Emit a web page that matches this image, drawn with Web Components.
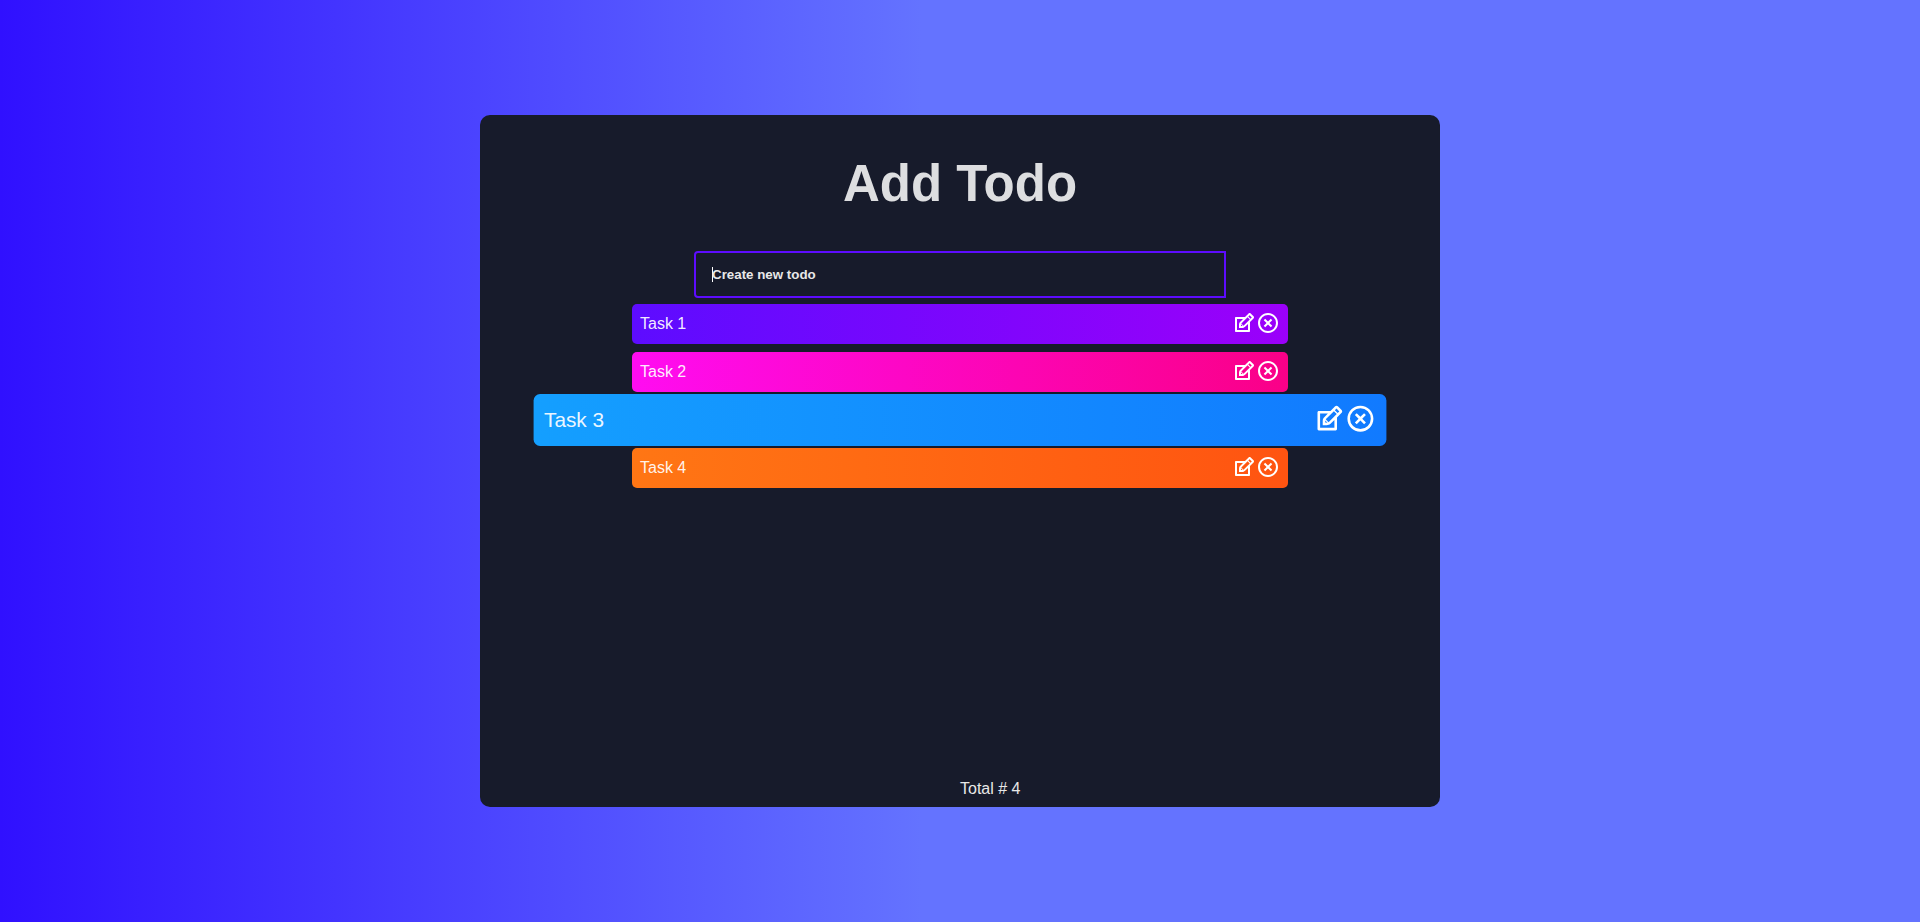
<!DOCTYPE html>
<html lang="en">
<head>
<meta charset="utf-8">
<meta name="viewport" content="width=device-width, initial-scale=1">
<title>Add Todo</title>
<style>
  body {
    margin: 0;
    font-family: "Liberation Sans", Arial, sans-serif;
    font-size: 16px;
    background: linear-gradient(90deg, #3010ff 0%, #6473ff 48%);
  }
</style>
</head>
<body>
<todo-app></todo-app>

<script>
  class TodoInput extends HTMLElement {
    constructor() {
      super();
      this.attachShadow({ mode: "open" }).innerHTML = `
        <style>
          :host { display: block; }
          form { display: flex; justify-content: center; }
          input {
            box-sizing: border-box;
            width: 532px;
            max-width: 90%;
            padding: 14px 16px;
            border: 2px solid #5d0cff;
            border-radius: 4px 0 0 4px;
            outline: none;
            font-family: inherit;
            font-weight: bold;
            color: #fff;
            background: linear-gradient(#fff, #fff) 16px 14px / 1px 15px no-repeat;
            caret-color: transparent;
          }
          input::placeholder { color: #e8e8e8; opacity: 1; }
        </style>
        <form>
          <input type="text" placeholder="Create new todo" aria-label="Create new todo">
        </form>`;
    }
  }
  customElements.define("todo-input", TodoInput);

  class TodoItem extends HTMLElement {
    constructor() {
      super();
      this.attachShadow({ mode: "open" }).innerHTML = `
        <style>
          :host {
            box-sizing: border-box;
            display: flex;
            align-items: center;
            justify-content: space-between;
            min-height: 40px;
            padding: 0 8px;
            border-radius: 5px;
            color: #fff;
            background: linear-gradient(90deg, #5d0cff 0%, #9b00fa 100%);
          }
          :host([tone="pink"]) { background: linear-gradient(90deg, #ff0cf1 0%, #fa0087 100%); }
          :host([tone="blue"]) { background: linear-gradient(90deg, #149fff 0%, #117aff 100%); }
          :host([tone="orange"]) { background: linear-gradient(90deg, #ff7614 0%, #ff5411 100%); }
          :host([active]) { transform: scale(1.3); }
          .text { color: #ffffffee; }
          .actions { display: flex; padding-bottom: 2px; }
          button { display: block; padding: 0; border: 0; background: none; color: inherit; cursor: pointer; }
          svg { display: block; width: 24px; height: 24px; fill: currentColor; }
        </style>
        <span class="text"><slot></slot></span>
        <div class="actions">
          <button type="button" aria-label="Edit">
            <svg viewBox="0 0 24 24"><path d="M21.561 5.318l-2.879-2.879c-.293-.293-.677-.439-1.061-.439-.385 0-.768.146-1.061.439l-3.56 3.561h-9c-.552 0-1 .447-1 1v13c0 .553.448 1 1 1h13c.552 0 1-.447 1-1v-9l3.561-3.561c.293-.293.439-.677.439-1.061s-.146-.767-.439-1.06zm-10.061 9.354l-2.172-2.172 6.293-6.293 2.172 2.172-6.293 6.293zm-2.561-1.339l1.756 1.728-1.695-.061-.061-1.667zm7.061 5.667h-11v-11h6l-3.18 3.18c-.293.293-.478.812-.629 1.289-.16.5-.191 1.056-.191 1.47v3.061h3.061c.414 0 1.108-.1 1.571-.29.464-.19.896-.347 1.188-.64l3.18-3.07v6zm2.5-11.328l-2.172-2.172 1.293-1.293 2.171 2.172-1.292 1.293z"/></svg>
          </button>
          <button type="button" aria-label="Delete">
            <svg viewBox="0 0 24 24"><path d="M12 22C6.477 22 2 17.523 2 12S6.477 2 12 2s10 4.477 10 10-4.477 10-10 10zm0-2a8 8 0 1 0 0-16 8 8 0 0 0 0 16zm0-9.414l2.828-2.829 1.415 1.415L13.414 12l2.829 2.828-1.415 1.415L12 13.414l-2.828 2.829-1.415-1.415L10.586 12 7.757 9.172l1.415-1.415L12 10.586z"/></svg>
          </button>
        </div>`;
    }
  }
  customElements.define("todo-item", TodoItem);

  class TodoApp extends HTMLElement {
    constructor() {
      super();
      this.attachShadow({ mode: "open" }).innerHTML = `
        <style>
          :host { display: grid; place-items: center; min-height: 100vh; }
          main {
            box-sizing: border-box;
            display: flex;
            flex-direction: column;
            width: 50%;
            min-height: 75vh;
            padding: 39px 0 9px;
            border-radius: 10px;
            background: #171b2b;
          }
          h1 {
            margin: 0 0 37px;
            font-size: 51px;
            line-height: 60px;
            text-align: center;
            color: #dddee0;
          }
          .list {
            display: flex;
            flex-direction: column;
            gap: 8px;
            width: 656px;
            max-width: 75%;
            margin: 6px auto 0;
          }
          footer { margin-top: auto; padding-left: 50%; line-height: 18px; color: #e8e8e8; }
        </style>
        <main>
          <h1>Add Todo</h1>
          <todo-input></todo-input>
          <div class="list">
            <todo-item>Task 1</todo-item>
            <todo-item tone="pink">Task 2</todo-item>
            <todo-item tone="blue" active>Task 3</todo-item>
            <todo-item tone="orange">Task 4</todo-item>
          </div>
          <footer>Total # 4</footer>
        </main>`;
    }
  }
  customElements.define("todo-app", TodoApp);
</script>
</body>
</html>
